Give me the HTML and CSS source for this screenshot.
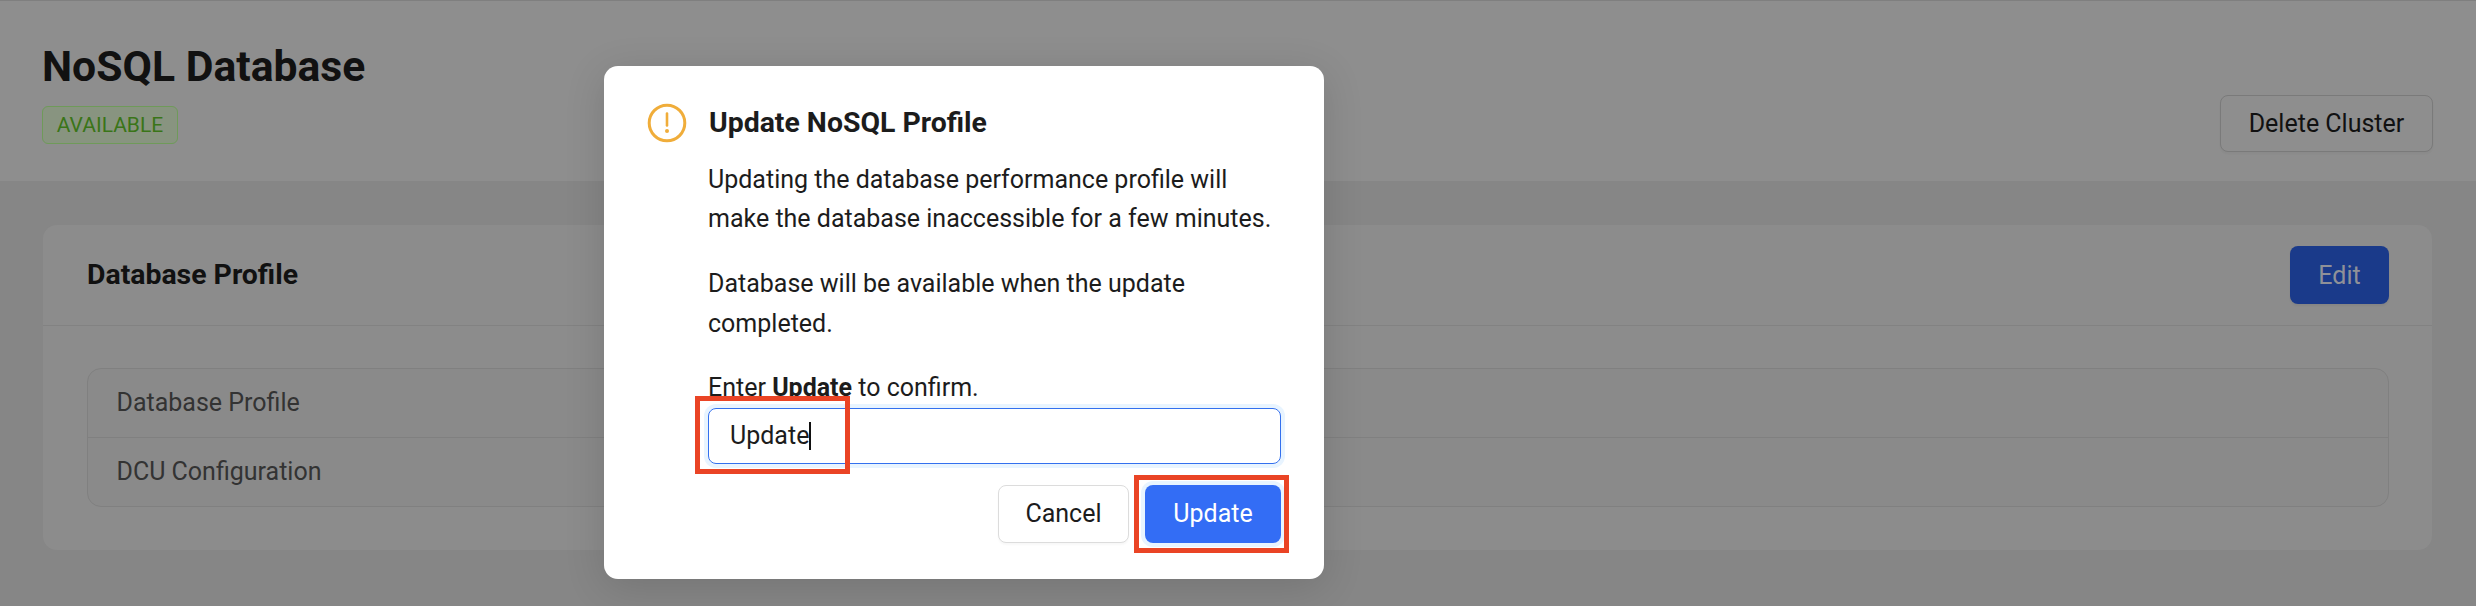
FILE: index.html
```html
<!DOCTYPE html>
<html lang="en">
<head>
  <meta charset="UTF-8" />
  <title>NoSQL Database</title>
  <link rel="stylesheet" href="styles.css">
</head>
<body>

<header class="page-header">
  <div>
    <h1>NoSQL Database</h1>
    <span class="badge">AVAILABLE</span>
  </div>
  <button class="btn btn-delete">Delete Cluster</button>
</header>

<main class="content">
  <section class="card">
    <div class="card-head">
      <h2>Database Profile</h2>
      <button class="btn btn-edit">Edit</button>
    </div>
    <div class="card-body">
      <div class="rows">
        <div class="row">Database Profile</div>
        <div class="row">DCU Configuration</div>
      </div>
    </div>
  </section>
</main>

<!-- Confirm dialog -->
<div class="overlay">
  <div class="modal">
    <div class="modal-title">
      <svg class="warn" viewBox="0 0 40 40" width="40" height="40">
        <circle cx="20" cy="20" r="17.8" fill="none" stroke="#f0ad3a" stroke-width="3"/>
        <path d="M20 10.5v12" stroke="#f0ad3a" stroke-width="2.6" stroke-linecap="round"/>
        <circle cx="20" cy="28" r="2" fill="#f0ad3a"/>
      </svg>
      <h3>Update NoSQL Profile</h3>
    </div>
    <div class="modal-body">
      <p class="first">Updating the database performance profile will make the database inaccessible for a few minutes.</p>
      <p>Database will be available when the update completed.</p>
      <p class="enter">Enter <b>Update</b> to confirm.</p>
      <div class="field"><span>Update</span><i class="caret"></i></div>
      <div class="actions">
        <button class="btn btn-cancel">Cancel</button>
        <button class="btn btn-update">Update</button>
      </div>
    </div>
    <!-- red annotations on the screenshot -->
    <div class="mark mark-input"></div>
    <div class="mark mark-btn"></div>
  </div>
</div>

</body>
</html>
```

FILE: styles.css
```css
* {
  box-sizing: border-box;
}

html, body {
  height: 606px;
  overflow: hidden;
}

body {
  margin: 0;
  font-family: Roboto, sans-serif;
  background: #868686;
  color: #333;
}

.btn {
  font-family: inherit;
  font-size: 25px;
  border-radius: 8px;
  cursor: pointer;
  padding: 0;
}

.page-header {
  height: 181px;
  padding: 39px 43px 0 42px;
  background: #8e8e8e;
  border-top: 1px solid #7f7f7f;
  display: flex;
  justify-content: space-between;
}

.page-header h1 {
  margin: 0 0 14px;
  font-size: 42.7px;
  line-height: 52px;
  color: #111;
}

.badge {
  display: block;
  width: 136px;
  height: 38px;
  line-height: 36px;
  text-align: center;
  font-size: 21px;
  color: #3a7518;
  background: #889480;
  border: 1px solid #6f9a5a;
  border-radius: 6px;
}

.btn-delete {
  margin-top: 55px;
  width: 213px;
  height: 57px;
  color: #111;
  background: #8e8e8e;
  border: 1px solid #7a7a7a;
  box-shadow: 0 2px 2px rgba(0,0,0,0.03);
}

.content {
  padding: 44px 44px 0 43px;
}

.card {
  height: 325px;
  background: #8c8c8c;
  border-radius: 14px;
}

.card-head {
  height: 101px;
  padding: 21px 43px 0 44px;
  display: flex;
  justify-content: space-between;
  border-bottom: 1px solid #828282;
}

.card-head h2 {
  margin: 0;
  font-size: 28.4px;
  line-height: 58px;
  color: #111;
}

.btn-edit {
  width: 99px;
  height: 58px;
  color: #8f9198;
  background: #1a3a8a;
  border: none;
  box-shadow: 0 2px 2px rgba(0,0,0,0.05);
}

.card-body {
  padding: 42px 43px 0 44px;
}

.rows {
  height: 139px;
  border: 1px solid #808080;
  border-radius: 14px;
  background: #8a8a8a;
}

.row {
  height: 68px;
  line-height: 68px;
  padding-left: 28.5px;
  font-size: 25px;
}

.row + .row {
  height: 69px;
  border-top: 1px solid #808080;
}

.overlay {
  position: absolute;
  top: 0;
  left: 0;
  right: 0;
  bottom: 0;
}

.modal {
  position: absolute;
  left: 604px;
  top: 66px;
  width: 720px;
  height: 513px;
  background: #fff;
  border-radius: 14px;
  box-shadow: 0 8px 40px rgba(0,0,0,0.14);
  color: #1c1c1c;
}

.modal-title {
  display: flex;
  align-items: center;
  gap: 22px;
  padding: 37px 0 0 43px;
}

.modal-title h3 {
  margin: 0;
  font-size: 28.4px;
  line-height: 40px;
}

.modal-body {
  padding: 17px 43px 0 104px;
  font-size: 25px;
  line-height: 40px;
}

.modal-body p {
  margin: 0 0 24px;
}

.modal-body .first {
  line-height: 39px;
  margin-bottom: 26px;
}

.modal-body .enter {
  margin: 0;
  line-height: 40px;
}

.field {
  height: 56px;
  display: flex;
  align-items: center;
  padding-left: 21px;
  border: 1px solid #3370ee;
  border-radius: 8px;
  box-shadow: 0 0 0 4px #e8f4ff;
}

.caret {
  width: 2px;
  height: 28px;
  background: #111;
}

.actions {
  display: flex;
  justify-content: flex-end;
  gap: 16px;
  margin-top: 21px;
}

.btn-cancel, .btn-update {
  height: 58px;
  padding-bottom: 2px;
}

.btn-cancel {
  width: 131px;
  color: #1c1c1c;
  background: #fff;
  border: 1px solid #dcdcdc;
  box-shadow: 0 2px 2px rgba(0,0,0,0.03);
}

.btn-update {
  width: 136px;
  color: #fff;
  background: #336df5;
  border: none;
  box-shadow: 0 0 0 4px #e8f4ff;
}

.mark {
  position: absolute;
  border: 5px solid #ea4425;
}

.mark-input {
  left: 91px;
  top: 330px;
  width: 155px;
  height: 78px;
}

.mark-btn {
  left: 530px;
  top: 409px;
  width: 155px;
  height: 78px;
}
```
